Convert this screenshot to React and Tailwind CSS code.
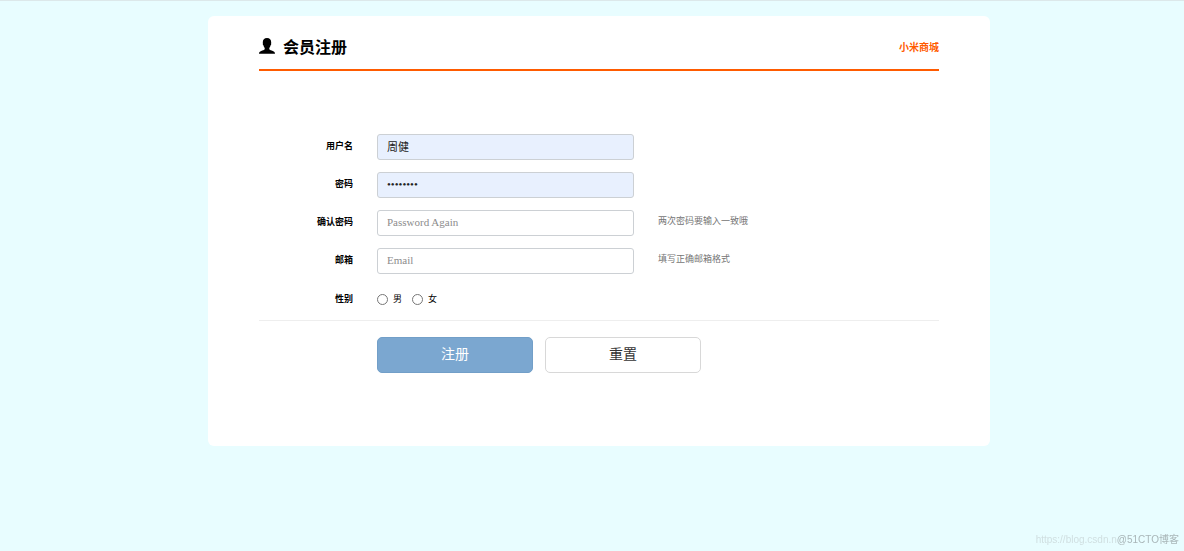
const fields = [
  { id: 'username', label: '用户名', type: 'text', value: '周健', filled: true },
  { id: 'password', label: '密码', type: 'password', value: '12345678', filled: true },
  { id: 'confirm', label: '确认密码', type: 'password', placeholder: 'Password Again', hint: '两次密码要输入一致哦' },
  { id: 'email', label: '邮箱', type: 'email', placeholder: 'Email', hint: '填写正确邮箱格式' },
];

const UserIcon = () => (
  <svg className="w-4 h-4 shrink-0" viewBox="0 0 16 16" fill="#000" aria-hidden="true">
    <path d="M8 0C5.200 0 3.800 1.700 3.800 4.300c0 .4 0 .7.1 1.100-.3.600 0 1.500.5 1.800.2 1.100.7 2 1.300 2.700v1.400c-.5.700-2.100 1.100-3.500 1.600C.8 13.400 0 14.200 0 15.700h16c0-1.500-.8-2.300-2.200-2.800-1.400-.5-3-.9-3.500-1.600V9.900c.6-.7 1.100-1.600 1.300-2.700.5-.3.8-1.200.5-1.800.1-.4.1-.7.1-1.100C12.200 1.700 10.800 0 8 0z" />
  </svg>
);

const Field = ({ id, label, type, value, placeholder, hint, filled }) => (
  <div className="flex items-start mb-3">
    <label htmlFor={id} className="w-[94px] mr-6 pt-1 text-right text-[9px] leading-4 font-bold">{label}</label>
    <input
      id={id}
      type={type}
      defaultValue={value}
      placeholder={placeholder}
      className={`w-[257px] h-[26px] px-[9px] pb-[2px] border border-[#ccd0d4] rounded-[3px] text-[11px] text-[#222] placeholder-[#8c8c8c] font-['Liberation_Serif','Noto_Sans_CJK_SC',serif] ${filled ? 'bg-[#e8f0fe]' : 'bg-white'}`}
    />
    {hint && <span className="ml-6 pt-[3px] text-[9px] leading-4 text-[#757575]">{hint}</span>}
  </div>
);

const App = () => (
  <div className="min-h-screen bg-[#e8fdff] border-t border-[#dce8ea] pt-[15px] text-black font-['Noto_Sans_CJK_SC',sans-serif]">
    <main className="ml-[208px] mr-[194px] px-[51px] pt-[15px] pb-[73px] bg-white rounded-md">
      <header className="flex items-center justify-between h-10 pb-2 border-b-2 border-[#ff5b00]">
        <h1 className="flex items-center gap-2 text-base font-bold">
          <UserIcon />
          会员注册
        </h1>
        <a href="#" className="text-[10px] font-bold text-[#ff5b00]">小米商城</a>
      </header>

      <form className="pt-[63px]" onSubmit={e => e.preventDefault()}>
        {fields.map(f => <Field key={f.id} {...f} />)}
        <fieldset className="flex items-center h-[26px]" aria-labelledby="gender">
          <span id="gender" className="w-[94px] mr-6 text-right text-[9px] font-bold">性别</span>
          <label className="flex items-center gap-[5px] mr-[10px] text-[9px]">
            <input type="radio" name="gender" className="w-[11px] h-[11px]" />
            男
          </label>
          <label className="flex items-center gap-[5px] text-[9px]">
            <input type="radio" name="gender" className="w-[11px] h-[11px]" />
            女
          </label>
        </fieldset>
        <div className="flex gap-3 mt-2 pt-4 pl-[118px] border-t border-[#eee]">
          <button type="submit" className="w-[156px] h-9 pb-1 rounded-[5px] border border-[#729fc8] bg-[#7ba7d0] text-sm text-white">注册</button>
          <button type="reset" className="w-[156px] h-9 pb-1 rounded-[5px] border border-[#d8d8d8] bg-white text-sm text-[#333]">重置</button>
        </div>
      </form>
    </main>

    <div className="fixed right-[5px] bottom-[3px] flex items-center text-[10px] leading-4 font-['Liberation_Sans','Noto_Sans_CJK_SC',sans-serif]">
      <span className="text-[#d0dfe1]">https://blog.csdn.n</span>
      <span className="text-[#a9b6b8]">@51CTO博客</span>
    </div>
  </div>
);

export default App;
